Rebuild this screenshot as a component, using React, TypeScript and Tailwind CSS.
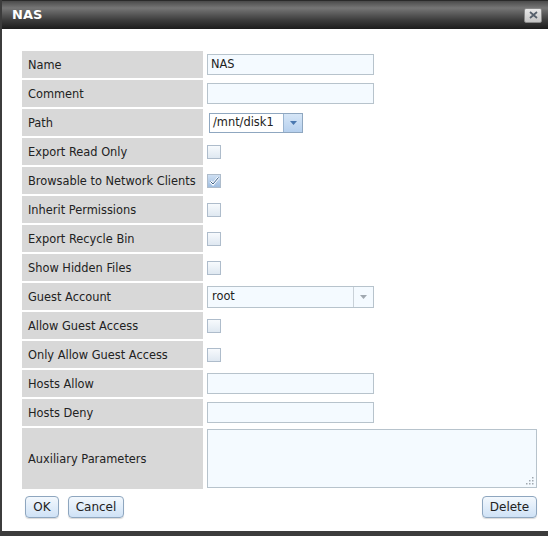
import React from "react";

const font = { fontFamily: '"DejaVu Sans", Verdana, sans-serif' };

function Label({ children, tall }: { children: React.ReactNode; tall?: boolean }) {
  return (
    <div
      className={`w-[181px] shrink-0 bg-[#d8d8d8] flex items-center pl-[6px] pt-[2px] text-[11.4px] text-[#222] ${tall ? "h-[61px]" : "h-[27px]"}`}
    >
      {children}
    </div>
  );
}

function TextInput({ value }: { value?: string }) {
  return (
    <div className="w-[167px] h-[21px] border border-[#b7c3cc] bg-[#f4faff] flex items-center pl-[3px] pt-[1px] text-[11.4px] text-[#222]">
      {value}
    </div>
  );
}

function Checkbox({ checked }: { checked?: boolean }) {
  return (
    <div
      className={`w-[14px] h-[14px] border border-[#aebccb] flex items-center justify-center ${checked ? "bg-[linear-gradient(#cfe0f3,#9fbde0)]" : "bg-[linear-gradient(#f7fafd,#dfe8f1)]"}`}
    >
      {checked && (
        <svg width="11" height="10" viewBox="0 0 11 10">
          <path d="M1.5 5.5 L4 8 L9.5 1.5" fill="none" stroke="#ffffff" strokeWidth="2.6" />
          <path d="M1.5 5.5 L4 8 L9.5 1.5" fill="none" stroke="#345c88" strokeWidth="1" />
        </svg>
      )}
    </div>
  );
}

function Row({ label, children, tall }: { label: string; children?: React.ReactNode; tall?: boolean }) {
  return (
    <div className="flex">
      <Label tall={tall}>{label}</Label>
      <div className="flex items-center pl-[4px]">{children}</div>
    </div>
  );
}

function Button({ children, w }: { children: React.ReactNode; w: string }) {
  return (
    <div
      className={`${w} h-[22px] rounded-[4px] border border-[#8ea6bf] bg-[linear-gradient(#f3f8fd,#cfe2f6)] flex items-center justify-center text-[12px] text-[#222] shadow-[0_1px_1px_rgba(0,0,0,0.15)]`}
    >
      {children}
    </div>
  );
}

export default function App() {
  return (
    <div style={font} className="w-[548px] h-[536px] bg-white border-l-2 border-b-[5px] border-[#3c3c3c] flex flex-col overflow-hidden">
      <div className="h-[29px] shrink-0 bg-[linear-gradient(#4a4a4a,#767676_25%,#3a3a3a_70%,#1c1c1c)] border-t border-[#2a2a2a] flex items-center justify-between pl-[10px] pr-[6px]">
        <span className="text-white font-bold text-[13px]">NAS</span>
        <div className="w-[18px] h-[15px] rounded-[2px] bg-[linear-gradient(#e8e8e8,#c4c4c4)] border border-[#888] flex items-center justify-center">
          <svg width="9" height="8" viewBox="0 0 9 8">
            <path d="M1 1 L8 7 M8 1 L1 7" stroke="#56606c" strokeWidth="1.8" />
          </svg>
        </div>
      </div>
      <div className="flex-1 pl-[20px] pr-[10px] pt-[22px] flex flex-col">
        <div className="flex flex-col gap-[2px]">
          <Row label="Name"><TextInput value="NAS" /></Row>
          <Row label="Comment"><TextInput /></Row>
          <Row label="Path">
            <div className="ml-[2px] w-[94px] h-[20px] border border-[#8fa7c0] bg-white flex text-[11.4px] text-[#222]">
              <div className="flex-1 flex items-center pl-[3px] pt-[1px]">/mnt/disk1</div>
              <div className="w-[19px] bg-[linear-gradient(#d6e6f7,#b6d0ee)] border-l border-[#9ab4d0] flex items-center justify-center">
                <svg width="7" height="4" viewBox="0 0 7 4"><path d="M0 0 L7 0 L3.5 4 Z" fill="#4a78b0" /></svg>
              </div>
            </div>
          </Row>
          <Row label="Export Read Only"><Checkbox /></Row>
          <Row label="Browsable to Network Clients"><Checkbox checked /></Row>
          <Row label="Inherit Permissions"><Checkbox /></Row>
          <Row label="Export Recycle Bin"><Checkbox /></Row>
          <Row label="Show Hidden Files"><Checkbox /></Row>
          <Row label="Guest Account">
            <div className="w-[167px] h-[22px] border border-[#b7c3cc] bg-[#f4faff] flex text-[11.4px] text-[#222]">
              <div className="flex-1 flex items-center pl-[4px] pt-[1px]">root</div>
              <div className="w-[20px] border-l border-[#c9d1d8] flex items-center justify-center">
                <svg width="7" height="4" viewBox="0 0 7 4"><path d="M0 0 L7 0 L3.5 4 Z" fill="#a0a8b0" /></svg>
              </div>
            </div>
          </Row>
          <Row label="Allow Guest Access"><Checkbox /></Row>
          <Row label="Only Allow Guest Access"><Checkbox /></Row>
          <Row label="Hosts Allow"><TextInput /></Row>
          <Row label="Hosts Deny"><TextInput /></Row>
          <Row label="Auxiliary Parameters" tall>
            <div className="relative w-[330px] h-[59px] border border-[#b7c3cc] bg-[#f4faff]">
              <svg className="absolute right-[2px] bottom-[2px]" width="8" height="8" viewBox="0 0 8 8">
                <rect x="6" y="0" width="1.5" height="1.5" fill="#a0a8b0" />
                <rect x="3" y="3" width="1.5" height="1.5" fill="#a0a8b0" />
                <rect x="6" y="3" width="1.5" height="1.5" fill="#a0a8b0" />
                <rect x="0" y="6" width="1.5" height="1.5" fill="#a0a8b0" />
                <rect x="3" y="6" width="1.5" height="1.5" fill="#a0a8b0" />
                <rect x="6" y="6" width="1.5" height="1.5" fill="#a0a8b0" />
              </svg>
            </div>
          </Row>
        </div>
        <div className="mt-[7px] flex items-center pl-[3px] pr-[1px]">
          <div className="flex gap-[9px]">
            <Button w="w-[34px]">OK</Button>
            <Button w="w-[56px]">Cancel</Button>
          </div>
          <div className="flex-1" />
          <Button w="w-[55px]">Delete</Button>
        </div>
      </div>
    </div>
  );
}
